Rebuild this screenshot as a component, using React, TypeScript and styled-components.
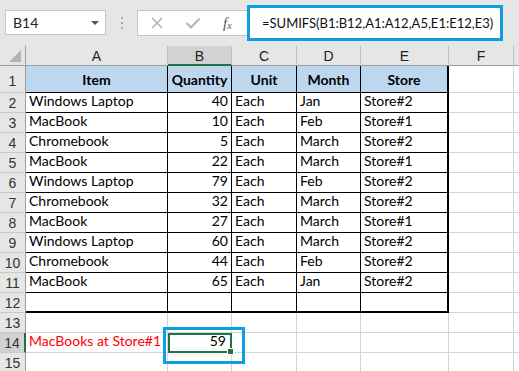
import React from 'react'
import styled, { createGlobalStyle, css } from 'styled-components'

const GlobalStyle = createGlobalStyle`
  html, body {
    margin: 0;
    padding: 0;
    background: #ffffff;
  }
  body {
    font-family: Lato, 'Liberation Sans', sans-serif;
    overflow: hidden;
  }
`

type Row = [string, number | '', string, string, string]

const rows: Row[] = [
  ['Windows Laptop', 40, 'Each', 'Jan', 'Store#2'],
  ['MacBook', 10, 'Each', 'Feb', 'Store#1'],
  ['Chromebook', 5, 'Each', 'March', 'Store#2'],
  ['MacBook', 22, 'Each', 'March', 'Store#1'],
  ['Windows Laptop', 79, 'Each', 'Feb', 'Store#2'],
  ['Chromebook', 32, 'Each', 'March', 'Store#2'],
  ['MacBook', 27, 'Each', 'March', 'Store#1'],
  ['Windows Laptop', 60, 'Each', 'March', 'Store#2'],
  ['Chromebook', 44, 'Each', 'Feb', 'Store#2'],
  ['MacBook', 65, 'Each', 'Jan', 'Store#2'],
  ['', '', '', '', '']
]

const headers = ['Item', 'Quantity', 'Unit', 'Month', 'Store']
const columns = ['A', 'B', 'C', 'D', 'E', 'F']

const GREEN = '#217346'
const CALLOUT = '#0aa0e2'

const App: React.FC = () => {
  return (
    <>
      <GlobalStyle />
      <Window>
        <Toolbar>
          <NameBox>
            <span>B14</span>
            <DropArrow />
          </NameBox>
          <Grip>
            <i />
            <i />
            <i />
          </Grip>
          <FormulaButtons>
            <IconSlot>
              <svg width="14" height="14" viewBox="0 0 14 14">
                <path d="M2 2 L12 12 M12 2 L2 12" stroke="#b4b4b4" strokeWidth="1.6" fill="none" />
              </svg>
            </IconSlot>
            <IconSlot>
              <svg width="16" height="14" viewBox="0 0 16 14">
                <path d="M1.5 7 L6 11.5 L14.5 2.5" stroke="#b4b4b4" strokeWidth="2" fill="none" />
              </svg>
            </IconSlot>
            <FxLabel>
              f<sub>x</sub>
            </FxLabel>
          </FormulaButtons>
          <FormulaInput>=SUMIFS(B1:B12,A1:A12,A5,E1:E12,E3)</FormulaInput>
        </Toolbar>

        <Sheet>
          <Corner>
            <CornerTriangle />
          </Corner>
          {columns.map((c) => (
            <ColHeader key={c} $selected={c === 'B'}>
              {c}
            </ColHeader>
          ))}
          <ColHeader />

          <RowHeader $tall>1</RowHeader>
          {headers.map((h, i) => (
            <Cell key={h} $kind="head" $align="center" $thickRight={i === 4}>
              {h}
            </Cell>
          ))}
          <Cell $kind="grid" />
          <Cell $kind="grid" />

          {rows.map((r, ri) => {
            const last = ri === rows.length - 1
            return (
              <React.Fragment key={ri}>
                <RowHeader>{ri + 2}</RowHeader>
                {r.map((v, ci) => (
                  <Cell
                    key={ci}
                    $kind="table"
                    $align={ci === 1 ? 'right' : 'left'}
                    $thickRight={ci === 4}
                    $thickBottom={last}
                  >
                    {v}
                  </Cell>
                ))}
                <Cell $kind="grid" />
                <Cell $kind="grid" />
              </React.Fragment>
            )
          })}

          <RowHeader>13</RowHeader>
          {columns.map((c) => (
            <Cell key={c} $kind="grid" />
          ))}
          <Cell $kind="grid" />

          <RowHeader $selected>14</RowHeader>
          <Cell $kind="grid" $color="#ff0000" $overflow>
            MacBooks at Store#1
          </Cell>
          <Cell $kind="grid" $align="right" $active>
            59
            <FillHandle />
            <Callout />
          </Cell>
          {columns.slice(2).map((c) => (
            <Cell key={c} $kind="grid" />
          ))}
          <Cell $kind="grid" />

          <RowHeader>15</RowHeader>
          {columns.map((c) => (
            <Cell key={c} $kind="grid" />
          ))}
          <Cell $kind="grid" />
        </Sheet>
      </Window>
    </>
  )
}

const Window = styled.div`
  width: 519px;
  height: 371px;
  display: flex;
  flex-direction: column;
  background: #e6e6e6;
  overflow: hidden;
`

const Toolbar = styled.div`
  height: 46px;
  flex: none;
  display: flex;
  align-items: center;
  padding-left: 5px;
  box-sizing: border-box;
  background: #e6e6e6;
`

const NameBox = styled.div`
  width: 101px;
  height: 25px;
  box-sizing: border-box;
  background: #ffffff;
  border: 1px solid #c6c6c6;
  display: flex;
  align-items: center;
  justify-content: space-between;
  padding: 0 6px 0 7px;
  font-size: 14px;
  color: #222;
  margin-top: -1px;
`

const DropArrow = styled.span`
  width: 0;
  height: 0;
  border-left: 4px solid transparent;
  border-right: 4px solid transparent;
  border-top: 4px solid #555;
`

const Grip = styled.div`
  width: 31px;
  display: flex;
  flex-direction: column;
  align-items: center;
  gap: 3px;

  i {
    width: 2px;
    height: 2px;
    background: #a8a8a8;
  }
`

const FormulaButtons = styled.div`
  width: 110px;
  height: 26px;
  box-sizing: border-box;
  background: #ffffff;
  border: 1px solid #c6c6c6;
  border-right: none;
  display: flex;
  align-items: center;
  padding-left: 12px;
`

const IconSlot = styled.span`
  width: 35px;
  display: flex;
  align-items: center;
  justify-content: flex-start;
`

const FxLabel = styled.span`
  font-family: 'Liberation Serif', serif;
  font-style: italic;
  font-size: 15px;
  color: #555;
  margin-left: 3px;

  sub {
    font-size: 10px;
    vertical-align: -1px;
  }
`

const FormulaInput = styled.div`
  width: 256px;
  height: 36px;
  box-sizing: border-box;
  border: 3px solid ${CALLOUT};
  background: #ffffff;
  display: flex;
  align-items: center;
  padding-left: 12px;
  font-size: 13px;
  color: #111;
  white-space: nowrap;
`

const Sheet = styled.div`
  flex: 1;
  display: grid;
  grid-template-columns: 26px 142px 64px 65px 64px 88px 65px 1fr;
  grid-template-rows: 20px 27px repeat(14, 20px);
  background: #ffffff;
  font-size: 14px;
`

const Corner = styled.div`
  background: #e6e6e6;
  border-right: 1px solid #9e9e9e;
  border-bottom: 1px solid #9e9e9e;
  box-sizing: border-box;
  position: relative;
`

const CornerTriangle = styled.div`
  position: absolute;
  right: 4px;
  bottom: 3px;
  width: 0;
  height: 0;
  border-left: 12px solid transparent;
  border-bottom: 12px solid #b3b3b3;
`

const ColHeader = styled.div<{ $selected?: boolean }>`
  box-sizing: border-box;
  display: flex;
  align-items: center;
  justify-content: center;
  font-family: 'Liberation Sans', sans-serif;
  font-size: 14px;
  color: #222;
  background: ${(p) => (p.$selected ? '#d2d2d2' : '#e6e6e6')};
  border-right: 1px solid #c0c0c0;
  border-bottom: ${(p) => (p.$selected ? `2px solid ${GREEN}` : '1px solid #9e9e9e')};
  padding-top: 1px;
`

const RowHeader = styled.div<{ $selected?: boolean; $tall?: boolean }>`
  box-sizing: border-box;
  display: flex;
  align-items: ${(p) => (p.$tall ? 'flex-end' : 'center')};
  justify-content: center;
  padding-bottom: ${(p) => (p.$tall ? '3px' : '0')};
  font-family: 'Liberation Sans', sans-serif;
  font-size: 14px;
  color: #333;
  background: ${(p) => (p.$selected ? '#d2d2d2' : '#e6e6e6')};
  border-bottom: 1px solid #c8c8c8;
  border-right: ${(p) => (p.$selected ? `2px solid ${GREEN}` : '1px solid #9e9e9e')};
`

type CellKind = 'head' | 'table' | 'grid'

const Cell = styled.div<{
  $kind: CellKind
  $align?: 'left' | 'right' | 'center'
  $thickRight?: boolean
  $thickBottom?: boolean
  $color?: string
  $overflow?: boolean
  $active?: boolean
}>`
  position: relative;
  box-sizing: border-box;
  display: flex;
  align-items: flex-end;
  justify-content: ${(p) =>
    p.$align === 'right' ? 'flex-end' : p.$align === 'center' ? 'center' : 'flex-start'};
  padding: 0 3px 2px 3px;
  line-height: 18px;
  white-space: nowrap;
  color: ${(p) => p.$color || '#000'};
  overflow: ${(p) => (p.$overflow || p.$active ? 'visible' : 'hidden')};
  z-index: ${(p) => (p.$active ? 2 : p.$overflow ? 1 : 0)};

  ${(p) =>
    p.$kind === 'grid'
      ? css`
          border-right: 1px solid #d4d4d4;
          border-bottom: 1px solid #d4d4d4;
        `
      : css`
          border-right: ${p.$thickRight ? 2 : 1}px solid #000;
          border-bottom: ${p.$thickBottom ? 2 : 1}px solid #000;
        `}

  ${(p) =>
    p.$kind === 'head' &&
    css`
      background: #bdd7ee;
      font-weight: 700;
      padding-bottom: 3px;
    `}

  ${(p) =>
    p.$active &&
    css`
      outline: 2px solid ${GREEN};
      outline-offset: -2px;
      padding-right: 5px;
    `}
`

const FillHandle = styled.span`
  position: absolute;
  right: -3px;
  bottom: -3px;
  width: 5px;
  height: 5px;
  background: ${GREEN};
  border: 1px solid #ffffff;
`

const Callout = styled.span`
  position: absolute;
  left: -5px;
  top: -6px;
  width: 82px;
  height: 37px;
  box-sizing: border-box;
  border: 3px solid ${CALLOUT};
  pointer-events: none;
`

export default App
